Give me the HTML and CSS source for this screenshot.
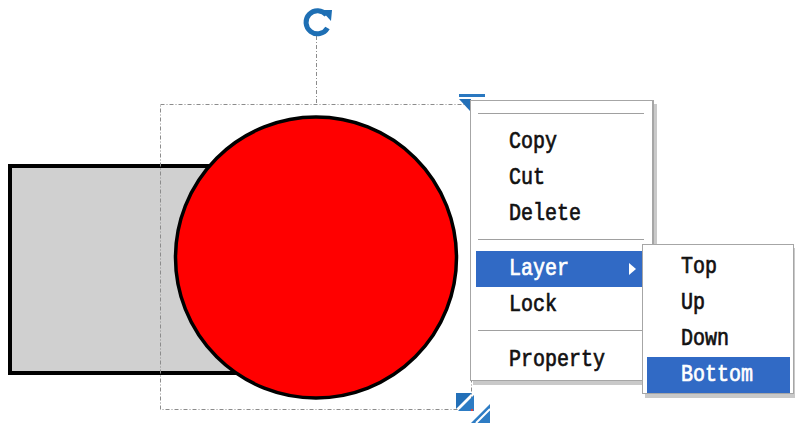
FILE: index.html
```html
<!DOCTYPE html>
<html lang="en">
<head>
  <meta charset="UTF-8">
  <title>Shape Context Menu</title>
  <link rel="stylesheet" href="styles.css">
</head>
<body>
  <div class="canvas">
    <!-- Shapes and selection handles -->
    <svg class="drawing" width="795" height="423" viewBox="0 0 795 423">
      <rect x="10" y="166" width="300" height="207" fill="#d0d0d0" stroke="#000" stroke-width="4"/>
      <circle cx="316" cy="257.5" r="140.5" fill="#ff0000" stroke="#000" stroke-width="3.5"/>

      <!-- selection frame -->
      <rect x="160.5" y="104.5" width="311" height="305" fill="none" stroke="#8c8c8c" stroke-width="1" stroke-dasharray="4 2 1 2"/>
      <line x1="316.5" y1="36" x2="316.5" y2="104" stroke="#8c8c8c" stroke-width="1" stroke-dasharray="4 2 1 2"/>

      <!-- rotate handle -->
      <path d="M326.5 15 A11.5 11.5 0 1 0 327.5 28" fill="none" stroke="#1e6fb4" stroke-width="5"/>
      <polygon points="321,10 332,10 331,21" fill="#1e6fb4"/>

      <!-- corner handles -->
      <rect x="459" y="94" width="26" height="3" fill="#2a78c0"/>
      <polygon points="459,99 471,99 470,111" fill="#2370b8"/>
      <polygon points="456,393 472,393 456,409" fill="#2370b8"/>
      <polygon points="474,395 474,411 458,411" fill="#2d7cc4"/>
      <polygon points="490,404 490,423 471,423" fill="#2d7cc4"/>
      <line x1="476" y1="423" x2="490" y2="409" stroke="#fff" stroke-width="2"/>
      <rect x="471" y="409" width="2" height="2" fill="#e04040"/>
    </svg>

    <div class="menu main-menu">
      <div class="sep"></div>
      <div class="item"><span class="label">Copy</span></div>
      <div class="item"><span class="label">Cut</span></div>
      <div class="item"><span class="label">Delete</span></div>
      <div class="sep"></div>
      <div class="item active"><span class="label">Layer</span><span class="arrow"></span></div>
      <div class="item"><span class="label">Lock</span></div>
      <div class="sep"></div>
      <div class="item"><span class="label">Property</span></div>
    </div>

    <div class="menu sub-menu">
      <div class="item"><span class="label">Top</span></div>
      <div class="item"><span class="label">Up</span></div>
      <div class="item"><span class="label">Down</span></div>
      <div class="item active"><span class="label">Bottom</span></div>
    </div>
  </div>
</body>
</html>
```

FILE: styles.css
```css
/* Global settings */
* { box-sizing: border-box; }
body {
  margin: 0;
  background: #fff;
  font-family: "Liberation Mono", "DejaVu Sans Mono", monospace;
  overflow: hidden;
}

/* Drawing area */
.canvas {
  position: relative;
  width: 795px;
  height: 423px;
  background: #fff;
}
.drawing {
  display: block;
}

/* Context menus */
.menu {
  position: absolute;
  background: #fff;
  border: 1px solid #a6a6a6;
  box-shadow: 3px 4px 0 rgba(120, 120, 120, 0.4);
}
.main-menu {
  left: 470px;
  top: 100px;
  width: 184px;
  height: 281px;
  padding: 12px 6px 2px 5px;
  border-right-width: 2px;
}
.sub-menu {
  left: 642px;
  top: 244px;
  width: 152px;
  height: 150px;
  padding: 4px 3px 4px 4px;
}

.sep {
  height: 2px;
  margin: 7px 2px 10px 2px;
  border-top: 1px solid #a0a0a0;
  border-bottom: 1px solid #fff;
}
.main-menu .sep:first-child {
  margin-top: 0;
  margin-bottom: 9px;
}

.item {
  position: relative;
  height: 36px;
  line-height: 36px;
  padding-left: 33px;
  font-size: 20px;
  color: #111;
}
.label {
  display: inline-block;
  transform: scaleY(1.15);
  -webkit-text-stroke: 0.6px #111;
}
.sub-menu .item {
  padding-left: 34px;
}
.item.active {
  background: #316ac5;
  color: #fff;
}
.item.active .label {
  -webkit-text-stroke: 0.6px #fff;
}
.arrow {
  position: absolute;
  right: 10px;
  top: 12px;
  width: 0;
  height: 0;
  border-top: 6px solid transparent;
  border-bottom: 6px solid transparent;
  border-left: 7px solid #fff;
}
```
